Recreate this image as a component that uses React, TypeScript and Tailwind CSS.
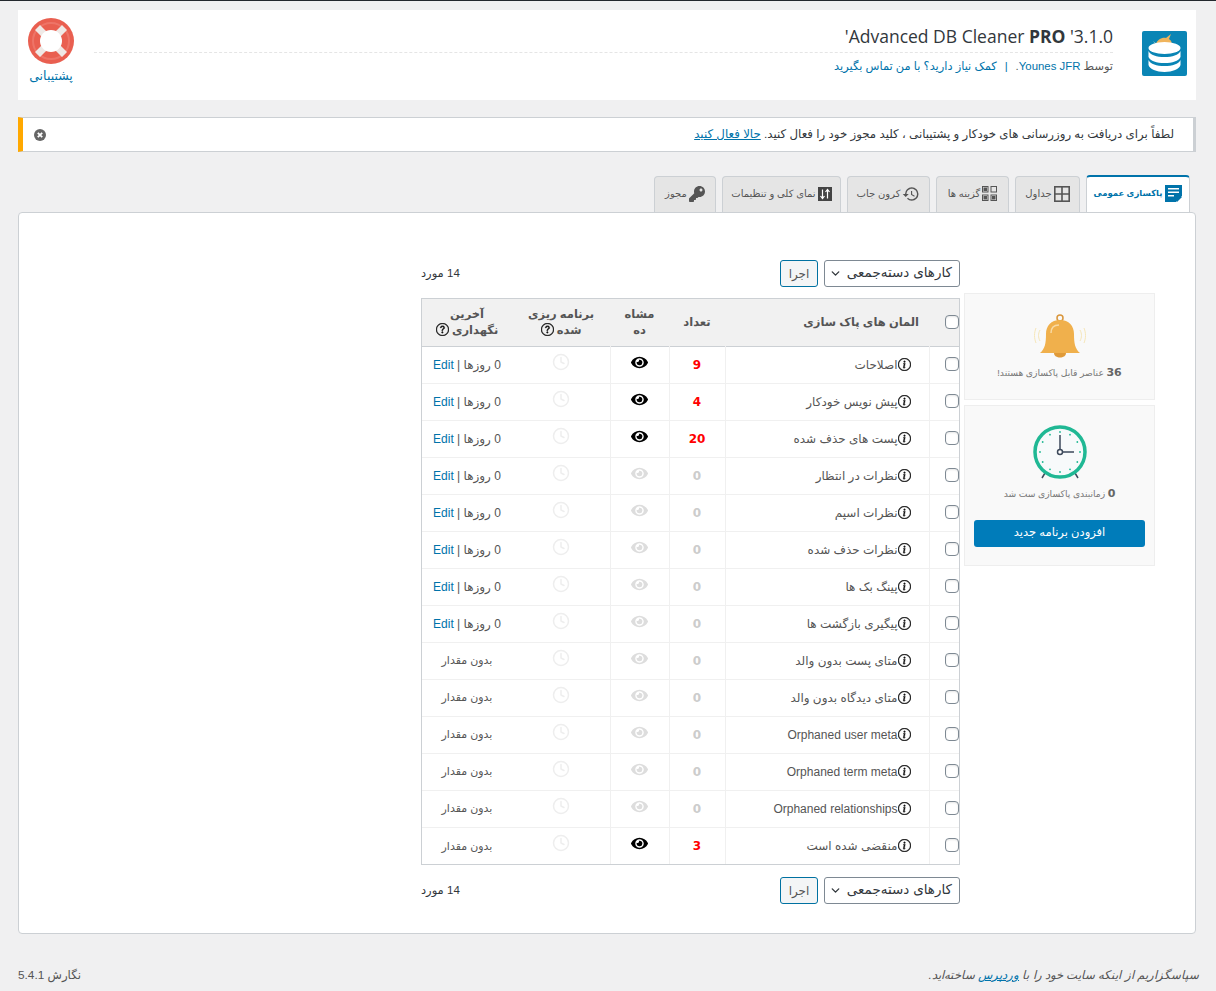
import { ChevronDown, Clock } from "lucide-react";
import { FaEye, FaKey } from "react-icons/fa";
import { BsInfoCircle, BsQuestionCircle } from "react-icons/bs";
import { MdHistory } from "react-icons/md";

const rows = [
  { name: "اصلاحات", count: 9, edit: true },
  { name: "پیش نویس خودکار", count: 4, edit: true },
  { name: "پست های حذف شده", count: 20, edit: true },
  { name: "نظرات در انتظار", count: 0, edit: true },
  { name: "نظرات اسپم", count: 0, edit: true },
  { name: "نظرات حذف شده", count: 0, edit: true },
  { name: "پینگ بک ها", count: 0, edit: true },
  { name: "پیگیری بازگشت ها", count: 0, edit: true },
  { name: "متای پست بدون والد", count: 0, edit: false },
  { name: "متای دیدگاه بدون والد", count: 0, edit: false },
  { name: "Orphaned user meta", count: 0, edit: false },
  { name: "Orphaned term meta", count: 0, edit: false },
  { name: "Orphaned relationships", count: 0, edit: false },
  { name: "منقضی شده است", count: 3, edit: false },
];

function DbLogo() {
  return (
    <svg width="45" height="45" viewBox="0 0 45 45" className="shrink-0">
      <rect width="45" height="45" rx="2" fill="#0a85b5" />
      <path d="M14 13c1-4 6-7 10-6l5-4-2 5c3 2 3 4 2 6z" fill="#f0b45c" />
      <path d="M11 10l5 4-1 1z" fill="#cfe3c5" />
      <ellipse cx="22.5" cy="17" rx="16" ry="6" fill="#fff" />
      <path d="M6.5 20c2 4 8 6 16 6s14-2 16-6v6c-2 4-8 6-16 6s-14-2-16-6z" fill="#fff" />
      <path d="M6.5 29c2 4 8 6 16 6s14-2 16-6v5c-1 4-8 7-16 7s-15-3-16-7z" fill="#fff" />
    </svg>
  );
}

function LifeBuoy() {
  return (
    <svg width="46" height="46" viewBox="0 0 46 46">
      <circle cx="23" cy="23" r="23" fill="#e95f50" />
      <circle cx="23" cy="23" r="18" fill="none" stroke="#ee7467" strokeWidth="2" />
      <path d="M7 12l5-5 10 10-5 5zM34 7l5 5-10 10-5-5zM39 34l-5 5-10-10 5-5zM12 39l-5-5 10-10 5 5z" fill="#efe9e6" />
      <circle cx="23" cy="23" r="11" fill="#fff" />
    </svg>
  );
}

function Bell() {
  return (
    <svg width="52" height="46" viewBox="0 0 52 46">
      <path d="M6 16c-2 4-2 7 0 11M2 14c-2 5-2 10 0 15M46 16c2 4 2 7 0 11M50 14c2 5 2 10 0 15" fill="none" stroke="#f6e6b8" strokeWidth="1" />
      <circle cx="26" cy="4" r="3" fill="none" stroke="#d9963c" strokeWidth="1.5" />
      <path d="M26 6c-9 0-14 6-14 14 0 9-1 15-6 19h40c-5-4-6-10-6-19 0-8-5-14-14-14z" fill="#f0b04c" />
      <path d="M17 19c0-5 3-8 8-8" fill="none" stroke="#f8d9a3" strokeWidth="1.5" />
      <path d="M20 39h12c0 6-12 6-12 0z" fill="#e09a38" />
    </svg>
  );
}

function AlarmClock() {
  const ticks = [0, 30, 60, 90, 120, 150, 180, 210, 240, 270, 300, 330];
  return (
    <svg width="56" height="56" viewBox="0 0 56 56">
      <path d="M13 48l-3 5M43 48l3 5" stroke="#3d4a5c" strokeWidth="1.5" />
      <circle cx="28" cy="27" r="25" fill="#f7fafb" stroke="#20b894" strokeWidth="3.5" />
      {ticks.map((t) => (
        <circle
          key={t}
          cx={28 + 20 * Math.sin((t * Math.PI) / 180)}
          cy={27 - 20 * Math.cos((t * Math.PI) / 180)}
          r="0.9"
          fill="#20b894"
        />
      ))}
      <path d="M28 10v14M31 27h11" stroke="#3d4a5c" strokeWidth="1.5" />
      <circle cx="28" cy="27" r="2.5" fill="#fff" stroke="#3d4a5c" strokeWidth="1.5" />
    </svg>
  );
}

function NoteIcon() {
  return (
    <svg width="17" height="17" viewBox="0 0 17 17" fill="#0073aa">
      <path d="M0 0h17v11l-6 6H0zM3 3v1.5h11V3zM3 6.5V8h11V6.5zM3 10v1.5h6V10z" fillRule="evenodd" />
      <path d="M12 17v-5h5z" />
    </svg>
  );
}

function TableIcon() {
  return (
    <svg width="16" height="16" viewBox="0 0 16 16" fill="none" stroke="#555" strokeWidth="1.6">
      <rect x="0.8" y="0.8" width="14.4" height="14.4" />
      <path d="M8 1v14M1 8h14" />
    </svg>
  );
}

function OptionsIcon() {
  return (
    <svg width="15" height="15" viewBox="0 0 15 15" fill="none" stroke="#555" strokeWidth="1">
      <rect x="0.5" y="0.5" width="5.5" height="5.5" />
      <rect x="9" y="0.5" width="5.5" height="5.5" />
      <rect x="0.5" y="9" width="5.5" height="5.5" />
      <rect x="9" y="9" width="5.5" height="5.5" />
      <rect x="2" y="2" width="2.5" height="2.5" fill="#555" />
      <rect x="10.5" y="10.5" width="2.5" height="2.5" fill="#555" />
      <rect x="2" y="10.5" width="2.5" height="2.5" fill="#555" />
    </svg>
  );
}

function SortIcon() {
  return (
    <svg width="14" height="14" viewBox="0 0 14 14">
      <rect width="14" height="14" fill="#444" />
      <path d="M4.5 2.5v9M2.5 9l2 2.5 2-2.5M9.5 11.5v-9M7.5 5l2-2.5 2 2.5" fill="none" stroke="#fff" strokeWidth="1.2" />
    </svg>
  );
}

function Bulk() {
  return (
    <div className="flex items-center gap-[6px]">
      <button className="flex h-[27px] w-[136px] items-center justify-between rounded-[3px] border border-[#7e8993] bg-white pl-[4px] pr-[7px] text-[13.5px] text-[#32373c]">
        <span className="whitespace-nowrap">کارهای دسته‌جمعی</span>
        <ChevronDown size={13} strokeWidth={2.5} color="#32373c" />
      </button>
      <button className="h-[27px] w-[38px] rounded-[3px] border border-[#0071a1] bg-[#f3f5f6] text-[12px] text-[#555]">اجرا</button>
    </div>
  );
}

function Check({ className }: { className?: string }) {
  return (
    <input
      type="checkbox"
      className={"block h-[14px] w-[14px] appearance-none rounded-[4px] border border-[#7e8993] bg-white shadow-[inset_0_1px_2px_rgba(0,0,0,0.1)] " + (className ?? "")}
    />
  );
}

function Tab({ active, icon, label, width }: { active?: boolean; icon: React.ReactNode; label: string; width: string }) {
  return (
    <div
      className={
        active
          ? "flex h-[37px] items-center justify-center gap-[3px] rounded-t-[4px] border border-b-0 border-t-2 border-[#ccd0d4] border-t-[#0073aa] bg-white pb-[2px] text-[8.5px] font-bold text-[#0073aa] " + width
          : "flex h-[36px] items-center justify-center gap-[2px] rounded-t-[4px] border border-b-0 border-[#ccd0d4] bg-[#e5e5e5] pb-[2px] text-[10px] text-[#555] " + width
      }
    >
      {icon}
      <span className="whitespace-nowrap">{label}</span>
    </div>
  );
}

export default function App() {
  return (
    <div dir="rtl" className="min-h-[991px] border-t border-[#23282d] bg-[#f0f0f1] pb-[8px] pl-[18px] pr-[20px] pt-[9px] font-['Liberation_Sans','DejaVu_Sans',sans-serif] text-[12px] text-[#444]">
      {/* Plugin header */}
      <div className="flex h-[90px] items-start bg-white pl-[10px] pr-[9px] pt-[21px]">
        <DbLogo />
        <div className="mr-[29px] flex-1">
          <h1 dir="rtl" className="-mt-[1px] h-[23px] border-b border-dashed border-[#e5e5e5] font-['Open_Sans'] text-[17.5px] leading-[12px] text-[#32373c]">
            Advanced DB Cleaner <b>PRO</b> '3.1.0'
          </h1>
          <p className="mt-[5px] text-[11.4px] text-[#555]">
            توسط <a className="text-[#0073aa]">Younes JFR</a>.
            <span className="mx-[8px] text-[#0073aa]">|</span>
            <a className="text-[#0073aa]">کمک نیاز دارید؟ با من تماس بگیرید</a>
          </p>
        </div>
        <div className="-mt-[13px] mr-[20px] flex w-[46px] flex-col items-center">
          <LifeBuoy />
          <span className="mt-[3px] whitespace-nowrap text-[12.5px] text-[#0073aa]">پشتیبانی</span>
        </div>
      </div>

      {/* Licence notice */}
      <div className="mt-[17px] flex h-[35px] items-center justify-between border-y border-l-[5px] border-r-[3px] border-y-[#ccd0d4] border-l-[#ffa800] border-r-[#ccd0d4] bg-white pl-[11px] pr-[19px] text-[11.8px] text-[#32373c]">
        <p>
          لطفاً برای دریافت به روزرسانی های خودکار و پشتیبانی ، کلید مجوز خود را فعال کنید.{" "}
          <a className="text-[#0073aa] underline">حالا فعال کنید</a>
        </p>
        <svg width="12" height="12" viewBox="0 0 12 12">
          <circle cx="6" cy="6" r="6" fill="#666" />
          <path d="M3.8 3.8l4.4 4.4M8.2 3.8l-4.4 4.4" stroke="#fff" strokeWidth="1.8" />
        </svg>
      </div>

      {/* Tabs */}
      <div className="mt-[23px] flex items-end gap-[6px] pr-[6px]">
        <Tab active icon={<NoteIcon />} label="پاکسازی عمومی" width="w-[104px]" />
        <Tab icon={<TableIcon />} label="جداول" width="w-[65px]" />
        <Tab icon={<OptionsIcon />} label="گزینه ها" width="w-[73px]" />
        <Tab icon={<MdHistory size={18} color="#555" />} label="کرون جاب" width="w-[83px]" />
        <Tab icon={<SortIcon />} label="نمای کلی و تنظیمات" width="w-[119px] text-[9.5px]" />
        <Tab icon={<FaKey size={16} color="#555" />} label="مجوز" width="w-[62px]" />
      </div>

      {/* Main panel */}
      <div className="flex h-[722px] gap-[4px] rounded-[4px] border border-[#ccd0d4] bg-white pr-[40px]">
        <div className="flex w-[191px] flex-col gap-[5px] pt-[80px]">
          <div className="flex h-[107px] flex-col items-center border border-[#eee] bg-[#f9f9f9] pt-[20px] text-[9.2px] text-[#777]">
            <Bell />
            <p className="mt-[5px]">
              <b className="font-['DejaVu_Sans'] text-[11px] text-[#666]">36</b> عناصر قابل پاکسازی هستند!
            </p>
          </div>
          <div className="flex h-[161px] flex-col items-center border border-[#eee] bg-[#f9f9f9] pt-[19px] text-[9.2px] text-[#777]">
            <AlarmClock />
            <p className="mt-[5px]">
              <b className="font-['DejaVu_Sans'] text-[11px] text-[#666]">0</b> زمانبندی پاکسازی ست شد
            </p>
            <button className="mt-[17px] h-[27px] w-[171px] rounded-[3px] bg-[#007cba] text-[11.5px] text-white">افزودن برنامه جدید</button>
          </div>
        </div>

        <div className="w-[539px] pt-[47px]">
          <div className="flex h-[27px] items-center justify-between">
            <Bulk />
            <span className="text-[11.5px] text-[#32373c]">14 مورد</span>
          </div>
          <div className="mt-[11px] border border-[#ccd0d4]">
            <table className="w-[537px] table-fixed border-collapse">
              <colgroup>
                <col className="w-[30px]" />
                <col className="w-[204px]" />
                <col className="w-[56px]" />
                <col className="w-[59px]" />
                <col className="w-[98px]" />
                <col className="w-[90px]" />
              </colgroup>
              <thead>
                <tr className="h-[47px] border-b border-[#ccd0d4] bg-[#f1f1f1] text-[11.5px] font-bold leading-[16px] text-[#555]">
                  <th><Check /></th>
                  <th className="pr-[10px] text-right">المان های پاک سازی</th>
                  <th>تعداد</th>
                  <th className="px-[8px]">مشاه<br />ده</th>
                  <th className="px-[6px]">
                    برنامه ریزی شده <BsQuestionCircle size={13} color="#111" stroke="#111" strokeWidth={0.5} className="inline align-[-2px]" />
                  </th>
                  <th className="px-[6px]">
                    آخرین نگهداری <BsQuestionCircle size={13} color="#111" stroke="#111" strokeWidth={0.5} className="inline align-[-2px]" />
                  </th>
                </tr>
              </thead>
              <tbody>
                {rows.map((r) => (
                  <tr key={r.name} className="h-[37px] border-b border-[#f0f0f0] last:border-b-0">
                    <td><Check className="-mt-[2px]" /></td>
                    <td className="border-r border-[#f0f0f0] pr-[18px] text-[#555]">
                      <span className="flex items-center whitespace-nowrap">
                        <BsInfoCircle size={13} color="#111" stroke="#111" strokeWidth={0.5} className="shrink-0" />
                        {r.name}
                      </span>
                    </td>
                    <td className={"border-r border-[#f0f0f0] text-center font-['DejaVu_Sans'] font-bold " + (r.count > 0 ? "text-[#ff0000]" : "text-[#ccc]")}>{r.count}</td>
                    <td className="border-x border-[#f0f0f0]">
                      <FaEye size={17} color={r.count > 0 ? "#000" : "#ddd"} className="mx-auto -mt-[5px]" />
                    </td>
                    <td>
                      <Clock size={18} strokeWidth={2} color="#eeeeee" className="mx-auto -mt-[5px]" />
                    </td>
                    {r.edit ? (
                      <td className="text-center text-[#555]">
                        0 روزها | <a className="text-[#0073aa]">Edit</a>
                      </td>
                    ) : (
                      <td className="text-center text-[11px] text-[#555]">بدون مقدار</td>
                    )}
                  </tr>
                ))}
              </tbody>
            </table>
          </div>
          <div className="mt-[12px] flex h-[27px] items-center justify-between">
            <Bulk />
            <span className="text-[11.5px] text-[#32373c]">14 مورد</span>
          </div>
        </div>
      </div>

      {/* Footer */}
      <div className="-mr-[3px] mt-[33px] flex items-center justify-between text-[11.8px] text-[#555]">
        <p className="italic">
          سپاسگزاریم از اینکه سایت خود را با <a className="text-[#0073aa] underline">وردپرس</a> ساخته‌اید.
        </p>
        <p>نگارش 5.4.1</p>
      </div>
    </div>
  );
}
